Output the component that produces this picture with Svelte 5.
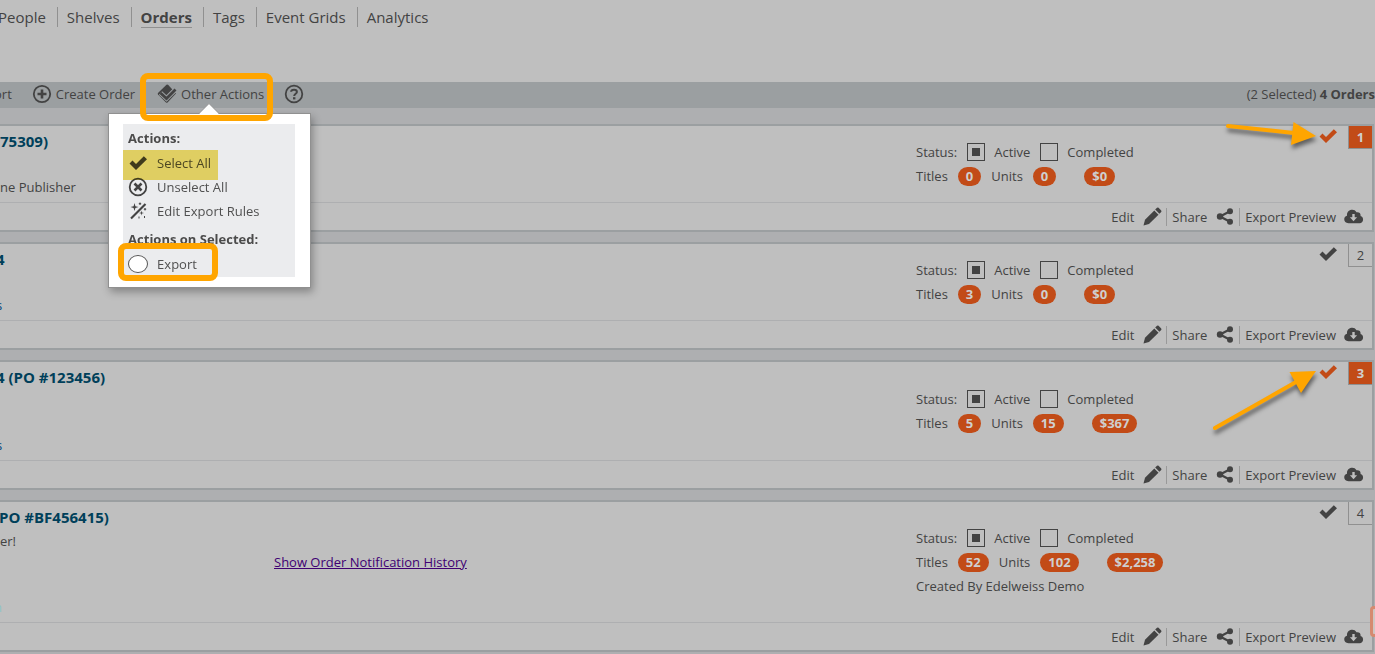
<script lang="ts">
  interface Order {
    id: number;
    title: string;
    align: string;
    lines: { text: string; kind?: string }[];
    selected: boolean;
    titles: string;
    units: string;
    total: string;
    createdBy?: string;
    history?: boolean;
  }

  const navItems = ['People', 'Shelves', 'Orders', 'Tags', 'Event Grids', 'Analytics'];
  const currentPage = 'Orders';

  let orders = $state<Order[]>([
    {
      id: 1,
      title: '75309)',
      align: 'flush',
      lines: [{ text: '' }, { text: 'ne Publisher', kind: 'flush' }],
      selected: true,
      titles: '0',
      units: '0',
      total: '$0'
    },
    {
      id: 2,
      title: '4',
      align: 'tuck',
      lines: [{ text: '' }, { text: 's', kind: 'blue' }],
      selected: false,
      titles: '3',
      units: '0',
      total: '$0'
    },
    {
      id: 3,
      title: '4 (PO #123456)',
      align: 'tuck',
      lines: [{ text: '' }, { text: '' }, { text: 's', kind: 'blue' }],
      selected: true,
      titles: '5',
      units: '15',
      total: '$367'
    },
    {
      id: 4,
      title: '(PO #BF456415)',
      align: 'hang',
      lines: [{ text: 'er!', kind: 'flush' }, { text: '' }, { text: '' }, { text: 'n', kind: 'cyan' }],
      selected: false,
      titles: '52',
      units: '102',
      total: '$2,258',
      createdBy: 'Created By Edelweiss Demo',
      history: true
    }
  ]);

  let selectedCount = $derived(orders.filter((o) => o.selected).length);

  function setAll(value: boolean) {
    for (const order of orders) order.selected = value;
  }
</script>

{#snippet check()}
  <svg class="icon" viewBox="0 0 20 20" aria-hidden="true">
    <path d="M1.500 10.500 L4.500 7.500 L8 11 L15.800 3.200 L19 6.200 L8 17 Z" fill="currentColor" />
  </svg>
{/snippet}

<div class="page">
  <nav>
    {#each navItems as item}
      <a href="#{item}" class:current={item === currentPage}><span>{item}</span></a>
    {/each}
  </nav>

  <div class="toolbar">
    <button class="sort">ort</button>
    <button class="create">
      <svg class="icon" viewBox="0 0 20 20" aria-hidden="true">
        <circle cx="10" cy="10" r="8.200" fill="none" stroke="currentColor" stroke-width="1.800" />
        <path d="M10 5.500V14.500M5.500 10H14.500" stroke="currentColor" stroke-width="2.600" />
      </svg>
      Create Order
    </button>
    <div class="menu-anchor">
      <button>
        <svg class="icon" viewBox="0 0 20 20" aria-hidden="true">
          <path d="M9.500 .8 Q10.500 .3 11.300 1 L19 9.500 L10.500 18.500 Q9.800 19.200 9 18.500 L1 10.500 Q.5 9.800 1 9 Z" fill="currentColor" />
          <path d="M3.500 9 L9.500 14.500 L18.500 5.500" fill="none" stroke="#9b9fa1" stroke-width="4.800" />
          <path d="M3.500 9 L9.500 14.500 L18.500 5.500" fill="none" stroke="currentColor" stroke-width="2.800" />
        </svg>
        Other Actions
      </button>
      <div class="popup">
        <svg class="pointer" viewBox="0 0 20 11" aria-hidden="true">
          <path d="M0 10.500 L10 .5 L20 10.500" fill="#fff" stroke="#909090" stroke-width="1" />
          <path d="M1 10H19V11H1Z" fill="#fff" />
        </svg>
        <div class="panel">
          <h3>Actions:</h3>
          <button onclick={() => setAll(true)}>{@render check()}Select All</button>
          <button onclick={() => setAll(false)}>
            <svg class="icon" viewBox="0 0 20 20" aria-hidden="true">
              <circle cx="10" cy="10" r="8.300" fill="none" stroke="currentColor" stroke-width="1.800" />
              <path d="M6.500 6.500 L13.500 13.500 M13.500 6.500 L6.500 13.500" stroke="currentColor" stroke-width="2.600" />
            </svg>
            Unselect All
          </button>
          <button>
            <svg class="icon" viewBox="0 0 20 20" aria-hidden="true">
              <path d="M3 17.500 L17.500 3" stroke="currentColor" stroke-width="2.200" />
              <path d="M6.500 2 L7.400 5.200 L10.500 6 L7.400 6.900 L6.500 10 L5.600 6.900 L2.500 6 L5.600 5.200Z" fill="currentColor" />
              <path d="M13.500 9.500 L14 11.500 L16 12 L14 12.500 L13.500 14.500 L13 12.500 L11 12 L13 11.500Z" fill="currentColor" />
              <path d="M12 1.500V4M10.800 2.700H13.200M17 7V9.500M15.800 8.200H18.200M11 15.500V17.500M16.500 15V17" stroke="currentColor" />
            </svg>
            Edit Export Rules
          </button>
          <h3>Actions on Selected:</h3>
          <label><input type="radio" name="bulk" value="export" />Export</label>
        </div>
        <i class="mark"></i>
        <i class="callout callout-export"></i>
      </div>
      <i class="callout callout-menu"></i>
    </div>
    <button class="help" aria-label="Help">
      <svg class="icon" viewBox="0 0 20 20" aria-hidden="true">
        <circle cx="10" cy="10" r="8.300" fill="none" stroke="currentColor" stroke-width="1.800" />
        <path d="M7.100 7.800 C7.300 4.900 12.900 4.900 12.900 7.900 C12.900 9.800 10.200 9.700 10.200 12" fill="none" stroke="currentColor" stroke-width="2" />
        <path d="M9 13.200H11.400V15.400H9Z" fill="currentColor" />
      </svg>
    </button>
    <p class="count">({selectedCount} Selected) <b>{orders.length} Orders</b></p>
  </div>

  <main>
    {#each orders as order (order.id)}
      <article>
        <div class="body">
          <div class="info">
            <h2 class={order.align}>{order.title}</h2>
            {#each order.lines as line}
              <p class={line.kind}>{line.text}</p>
            {/each}
          </div>
          <div class="notes">
            {#if order.history}
              <a href="#history">Show Order Notification History</a>
            {/if}
          </div>
          <div class="meta">
            <div class="row">
              Status:
              <label><input type="radio" name="status-{order.id}" checked />Active</label>
              <label><input type="radio" name="status-{order.id}" />Completed</label>
            </div>
            <div class="row">
              Titles <b>{order.titles}</b>
              Units <b>{order.units}</b>
              <b class="total">{order.total}</b>
            </div>
            {#if order.createdBy}
              <div class="row">{order.createdBy}</div>
            {/if}
          </div>
          <div class="pick" class:selected={order.selected}>
            <button aria-label="Select order {order.id}" onclick={() => (order.selected = !order.selected)}>
              {@render check()}
            </button>
            <span class="number">{order.id}</span>
          </div>
        </div>
        <footer>
          <button>
            Edit
            <svg class="icon" viewBox="0 0 20 20" aria-hidden="true">
              <path d="M1.500 18.500 L3 12.800 L12.300 3.500 L16.500 7.700 L7 17 Z" fill="currentColor" />
              <path d="M13.200 2.600 L15 .8 Q15.800 .2 16.600 .8 L19.200 3.400 Q19.800 4.200 19.200 5 L17.400 6.800 Z" fill="currentColor" />
            </svg>
          </button>
          <button>
            Share
            <svg class="icon" viewBox="0 0 20 20" aria-hidden="true">
              <path d="M15 4.200 L5 9.500 L15 14.800" fill="none" stroke="currentColor" stroke-width="2.200" />
              <circle cx="15" cy="4.200" r="3" fill="currentColor" />
              <circle cx="5" cy="9.500" r="3.200" fill="currentColor" />
              <circle cx="15" cy="14.800" r="3" fill="currentColor" />
            </svg>
          </button>
          <button>
            Export Preview
            <svg class="icon" viewBox="0 0 20 20" aria-hidden="true">
              <path d="M4.500 16.200 C-1 16.200 -.8 9.200 3 8.700 C2.300 2.700 10.300 .7 12.500 5.300 C15.500 4.800 17 6.700 16.500 9 C20.300 9.700 19.800 16.200 15.500 16.200 Z" fill="currentColor" />
              <path d="M9.500 7V11" stroke="#bfbfbf" stroke-width="2.400" />
              <path d="M5.900 10.200H13.100L9.500 14.200Z" fill="#bfbfbf" />
            </svg>
          </button>
        </footer>
      </article>
    {/each}
  </main>

  <i class="side-tab"></i>
  <svg class="arrows" viewBox="0 0 175 330" aria-hidden="true">
    <g fill="#ffa500" stroke="#ffa500">
      <path d="M28 6 L94 13" stroke-width="4" stroke-linecap="round" />
      <path d="M93.500 2 L116 16 L91 25 Z" stroke="none" />
      <path d="M15 308 L96 262" stroke-width="4" stroke-linecap="round" />
      <path d="M89.500 252 L116 251 L101 273 Z" stroke="none" />
    </g>
  </svg>
</div>

<style>
  :global(body) {
    background: #aeafb1;
    overflow: hidden;
  }

  .page {
    position: relative;
    overflow: hidden;
    font: 13px/20px 'Open Sans', sans-serif;
    color: #434343;
  }

  h2,
  h3,
  p {
    margin: 0;
  }

  button {
    display: flex;
    align-items: center;
    padding: 0;
    border: 0;
    background: none;
    color: inherit;
    font: inherit;
    cursor: pointer;
  }

  .icon {
    width: 20px;
    height: 20px;
    flex: none;
  }

  nav {
    display: flex;
    height: 75px;
    padding-top: 7px;
    margin-left: -11px;
    background: #bfbfbf;
    font-size: 15px;
  }

  nav a {
    height: 20px;
    padding: 0 11px 0 9px;
    border-right: 1px solid #909090;
    color: inherit;
    text-decoration: none;
  }

  nav a:last-child {
    border: 0;
  }

  nav span {
    display: block;
  }

  .current span {
    border-bottom: 1px solid #909090;
    font-weight: 700;
  }

  .toolbar {
    display: flex;
    align-items: center;
    height: 24px;
    padding-bottom: 2px;
    background: #9b9fa1;
  }

  .toolbar > button,
  .menu-anchor > button {
    gap: 4px;
  }

  .sort {
    margin-left: -6px;
  }

  .create {
    margin-left: 20px;
  }

  .menu-anchor {
    position: relative;
    margin-left: 22px;
  }

  .help {
    margin-left: 20px;
  }

  .count {
    margin-left: auto;
  }

  .popup {
    position: absolute;
    z-index: 2;
    top: 29px;
    left: -49px;
    width: 172px;
    padding: 10px 15px 10px 14px;
    border: 1px solid #909090;
    background: #fff;
    box-shadow: 2px 4px 8px rgba(0, 0, 0, 0.3);
  }

  .pointer {
    position: absolute;
    top: -11px;
    left: 90px;
    width: 20px;
    height: 11px;
  }

  .panel {
    padding: 1px 5px;
    background: #ebecee;
  }

  .panel h3 {
    margin-top: 3px;
    font: 700 13px/26px 'Open Sans', sans-serif;
    color: #4b4b4b;
  }

  .panel h3:first-child {
    margin-top: 0;
  }

  .panel button,
  .panel label {
    display: flex;
    align-items: center;
    gap: 9px;
    height: 24px;
    color: #505050;
  }

  .panel .icon {
    color: #434343;
  }

  .panel input {
    appearance: none;
    width: 20px;
    height: 18px;
    margin: 0;
    border: 1px solid #555;
    border-radius: 50%;
    background: #fff;
  }

  .mark {
    position: absolute;
    top: 36px;
    left: 14px;
    width: 95px;
    height: 30px;
    background: #f2df69;
    mix-blend-mode: multiply;
  }

  .callout {
    position: absolute;
    z-index: 3;
    box-sizing: border-box;
    border: 6px solid #ffa500;
    border-radius: 8px;
    pointer-events: none;
  }

  .callout-menu {
    top: -11px;
    left: -17px;
    width: 133px;
    height: 48px;
  }

  .callout-export {
    top: 129px;
    left: 9px;
    width: 100px;
    height: 38px;
  }

  main {
    display: flex;
    flex-direction: column;
    gap: 10px;
    padding: 16px 1px 10px 0;
  }

  article {
    border: solid #9b9fa1;
    border-width: 2px 2px 2px 0;
    background: #bfbfbf;
  }

  .body {
    position: relative;
    display: flex;
    align-items: center;
  }

  .info {
    width: 274px;
    padding: 4px 0;
  }

  .info h2,
  .info p {
    height: 22px;
    line-height: 22px;
  }

  .info h2 {
    height: 24px;
    font-size: 15px;
    font-weight: 700;
    color: #003f5a;
  }

  .info .tuck {
    margin-left: -4px;
  }

  .info .hang {
    margin-left: -6px;
  }

  .info .blue {
    margin-left: -4px;
    color: #003f7a;
  }

  .info .cyan {
    margin-left: -6px;
    color: #8fc4c8;
  }

  .notes {
    flex: 1;
  }

  .notes a {
    color: #400073;
  }

  .meta {
    width: 456px;
  }

  .row {
    display: flex;
    align-items: center;
    gap: 10px;
    height: 24px;
  }

  .row label {
    display: flex;
    align-items: center;
    gap: 9px;
  }

  .row input {
    appearance: none;
    display: grid;
    place-items: center;
    width: 18px;
    height: 18px;
    margin: 0;
    border: 1px solid #434343;
  }

  .row input:checked::before {
    content: '';
    width: 8px;
    height: 8px;
    background: #434343;
  }

  .row b {
    padding: 0 8px;
    border-radius: 10px;
    background: #c24b17;
    color: #cfcfcf;
    line-height: 19px;
  }

  .row .total {
    margin-left: 18px;
  }

  .pick {
    position: absolute;
    top: 0;
    right: 0;
    display: flex;
    align-items: flex-start;
    gap: 10px;
  }

  .number {
    width: 23px;
    border: solid #909090;
    border-width: 0 0 1px 1px;
    line-height: 22px;
    text-align: center;
  }

  .selected button {
    color: #c24b17;
  }

  .selected .number {
    background: #c24b17;
    color: #cfcfcf;
    font-weight: 700;
  }

  footer {
    display: flex;
    justify-content: flex-end;
    align-items: center;
    height: 27px;
    padding-right: 8px;
    border-top: 1px solid #aeafb1;
  }

  footer button {
    gap: 8px;
    height: 18px;
    padding: 0 0 0 5px;
  }

  footer button + button {
    margin-left: 4px;
    border-left: 1px solid #999;
  }

  .side-tab {
    position: absolute;
    top: 606px;
    right: -22px;
    width: 21px;
    height: 25px;
    border: 3px solid #d58a70;
    border-radius: 4px;
    background: #cfc6c3;
  }

  .arrows {
    position: absolute;
    z-index: 4;
    top: 120px;
    right: 0;
    width: 175px;
    height: 330px;
    filter: drop-shadow(1px 4px 2px rgba(0, 0, 0, 0.5));
    pointer-events: none;
  }
</style>
